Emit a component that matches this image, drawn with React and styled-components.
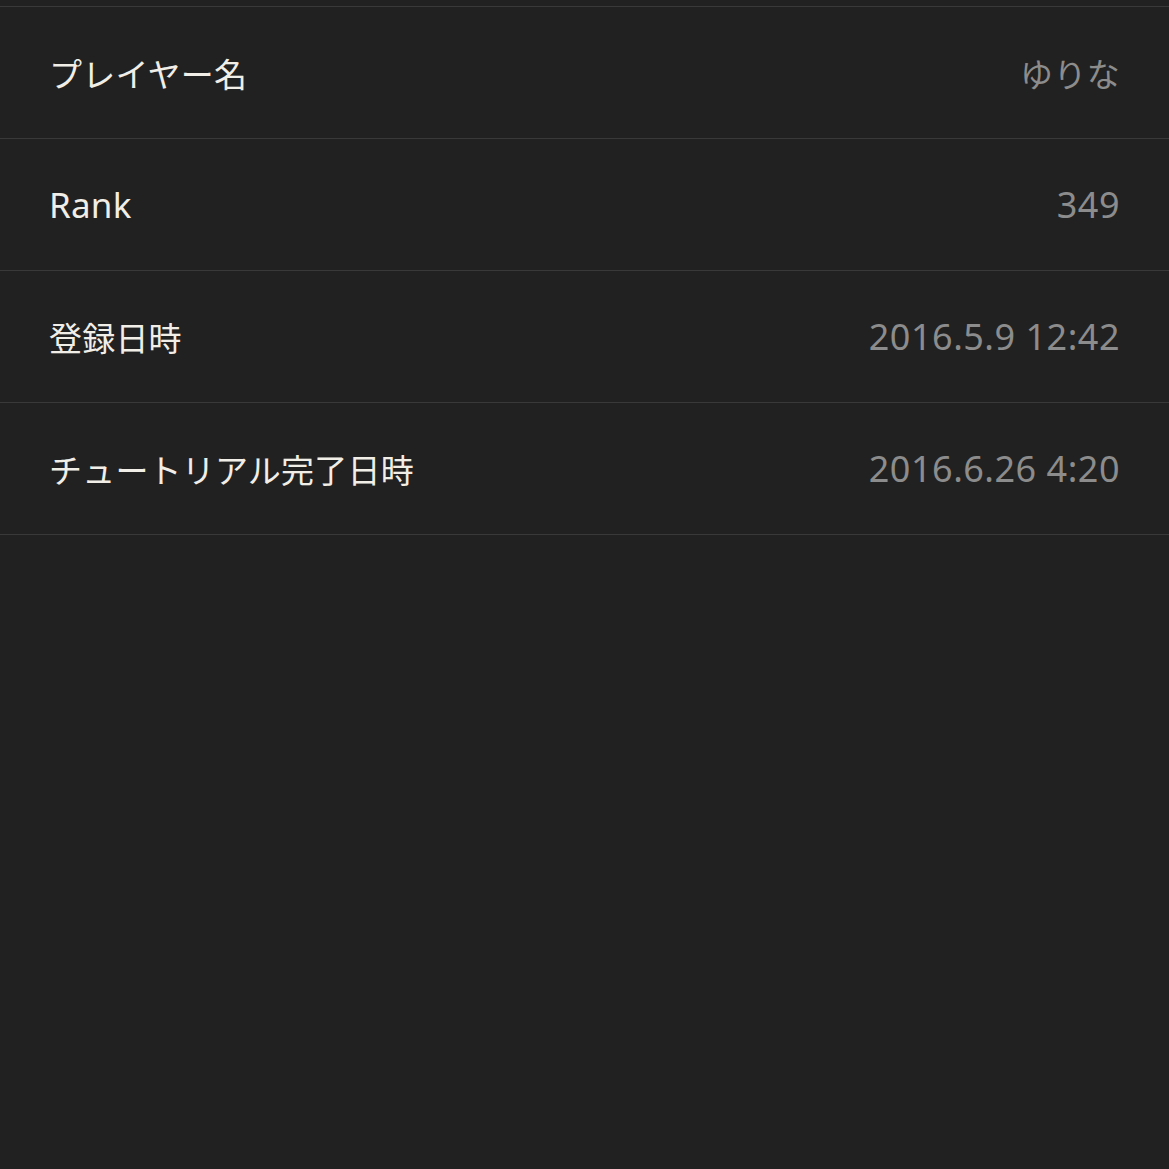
import React from 'react';
import styled, { createGlobalStyle } from 'styled-components';

const GlobalStyle = createGlobalStyle`
  html, body {
    margin: 0;
    padding: 0;
    background: #212121;
  }
  body {
    font-family: "Noto Sans", "Noto Sans CJK JP", sans-serif;
  }
`;

const Page = styled.div`
  min-height: 1169px;
  background: #212121;
  padding-top: 6px;
  box-sizing: border-box;
`;

const List = styled.ul`
  list-style: none;
  margin: 0;
  padding: 0;
  border-top: 1px solid #393939;
`;

const Row = styled.li`
  display: flex;
  align-items: center;
  justify-content: space-between;
  height: 131px;
  padding: 0 49px;
  border-bottom: 1px solid #393939;
`;

// latin text in the reference is set a little larger than the kana/kanji
const Label = styled.span`
  color: #f1eee8;
  font-size: ${({ $latin }) => ($latin ? '35px' : '33px')};
  letter-spacing: 0.2px;
`;

const Value = styled.span`
  color: #8c8c8c;
  font-size: ${({ $latin }) => ($latin ? '36px' : '33px')};
  letter-spacing: ${({ $latin }) => ($latin ? '0.5px' : '0.3px')};
`;

const rows = [
  { label: 'プレイヤー名', value: 'ゆりな' },
  { label: 'Rank', value: '349', latinLabel: true, latinValue: true },
  { label: '登録日時', value: '2016.5.9 12:42', latinValue: true },
  { label: 'チュートリアル完了日時', value: '2016.6.26 4:20', latinValue: true },
];

const App = () => {
  return (
    <Page>
      <GlobalStyle />
      <List>
        {rows.map((row) => (
          <Row key={row.label}>
            <Label $latin={row.latinLabel}>{row.label}</Label>
            <Value $latin={row.latinValue}>{row.value}</Value>
          </Row>
        ))}
      </List>
    </Page>
  );
};

export default App;
